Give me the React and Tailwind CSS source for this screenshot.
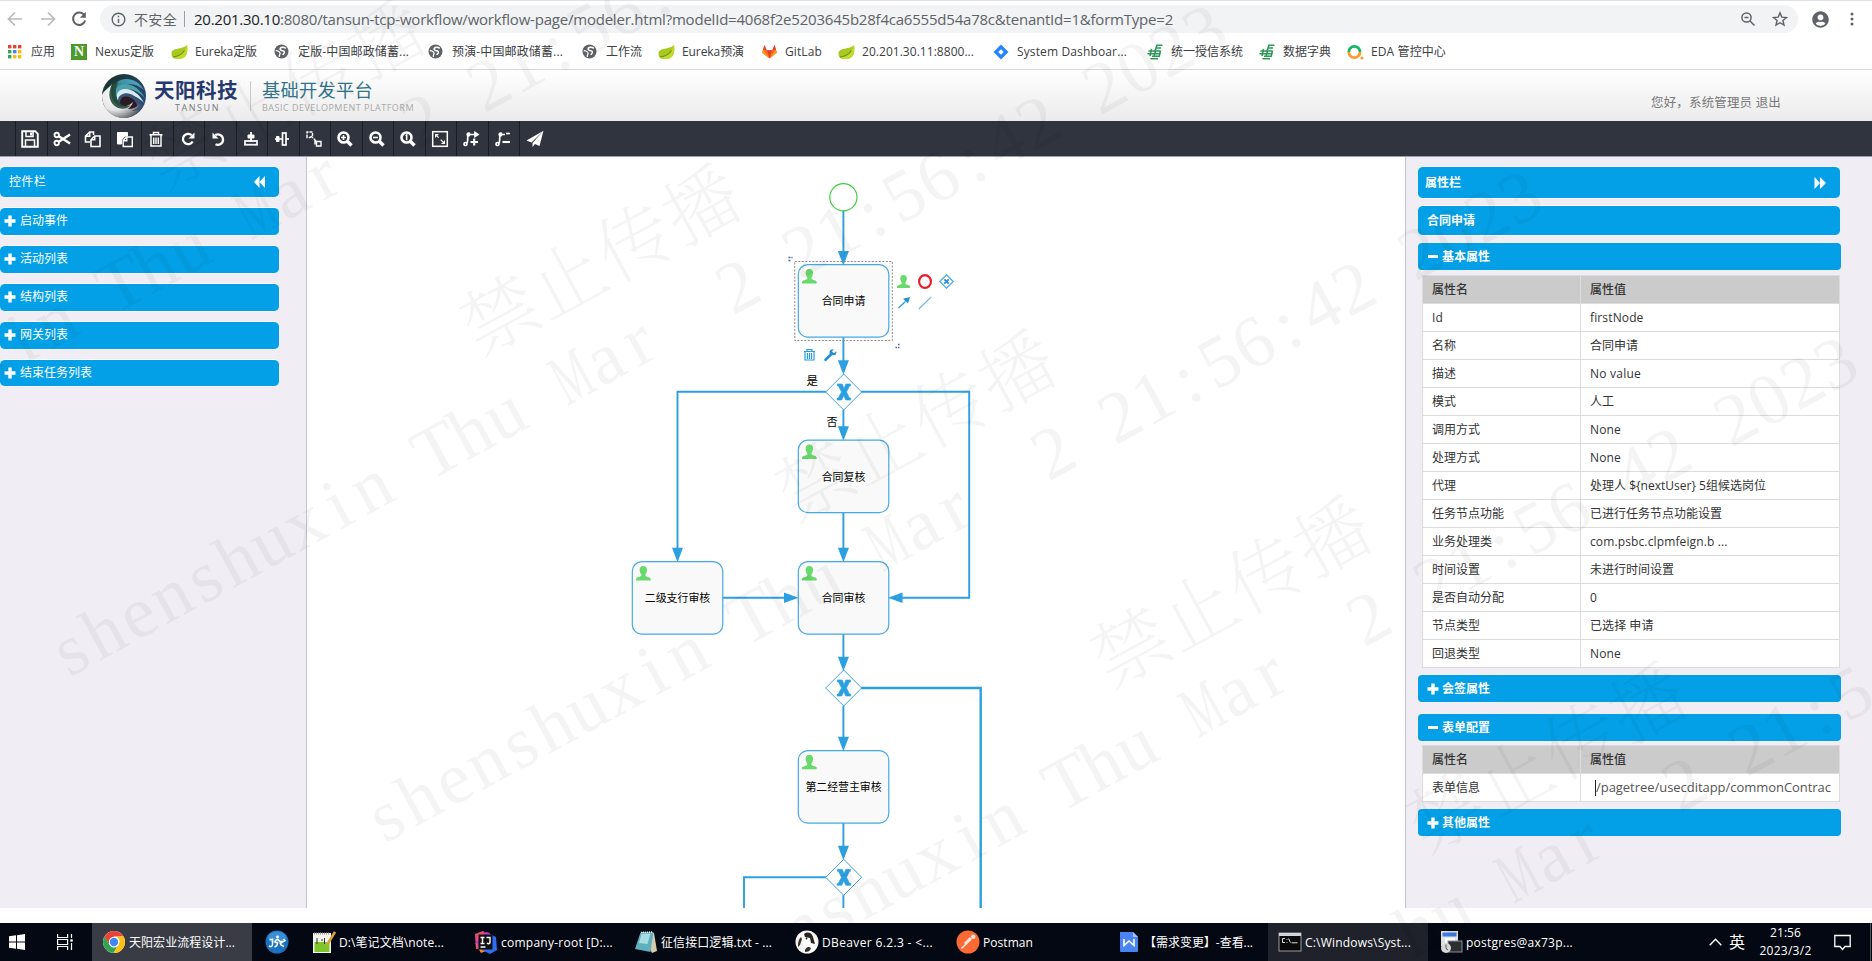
import { useLayoutEffect, useRef } from "react";
import { FaUserCircle } from "react-icons/fa";

const FONT = "font-['Open_Sans','Noto_Sans_CJK_SC',sans-serif]";

/* A single line of text tracked so that it fills exactly `w` pixels. */
function Fit({ w, className = "", children }) {
  const ref = useRef(null);
  useLayoutEffect(() => {
    const el = ref.current;
    el.style.letterSpacing = "0px";
    const natural = el.getBoundingClientRect().width;
    el.style.letterSpacing = (w - natural) / String(children).length + "px";
  }, [w, children]);
  return (
    <span ref={ref} className={"inline-block shrink-0 self-start whitespace-pre " + className}>
      {children}
    </span>
  );
}

/* ---------- Browser chrome ---------- */

function AddressBar() {
  return (
    <div className="flex h-[37px] items-center border-t border-[#dee1e6] bg-white text-[#5f6368]">
      <svg className="ml-[6px] h-[18px] w-[18px]" viewBox="0 0 18 18" fill="none" stroke="#b8babd" strokeWidth="1.7">
        <path d="M16 9H3M9 2.5 2.5 9 9 15.5" />
      </svg>
      <svg className="ml-[15px] h-[18px] w-[18px]" viewBox="0 0 18 18" fill="none" stroke="#b8babd" strokeWidth="1.7">
        <path d="M2 9h13M9 2.5 15.500 9 9 15.500" />
      </svg>
      <svg className="ml-[13px] h-[18px] w-[18px]" viewBox="0 0 18 18" fill="none" stroke="#5f6368" strokeWidth="2">
        <path d="M14.300 5.100A6.200 6.200 0 1 0 15.200 10.500" />
        <path d="M15.800 1.800v6h-6z" fill="#5f6368" stroke="none" />
      </svg>
      <div className="ml-[12px] flex h-[28px] w-[1698px] items-center rounded-full bg-[#f1f3f4] pl-[11px]">
        <svg className="h-[15px] w-[15px]" viewBox="0 0 15 15" fill="none" stroke="#5f6368" strokeWidth="1.4">
          <circle cx="7.500" cy="7.500" r="6.300" />
          <path d="M7.500 6.700V11M7.500 3.800v1.500" />
        </svg>
        <div className="ml-[8px] w-[50px] text-[14px]"><Fit w={43}>不安全</Fit></div>
        <div className="h-[16px] w-px bg-[#9aa0a6]" />
        <div className="ml-[9px] flex text-[15px]">
          <Fit w={86} className="text-[#202124]">20.201.30.10</Fit>
          <Fit w={893}>:8080/tansun-tcp-workflow/workflow-page/modeler.html?modelId=4068f2e5203645b28f4ca6555d54a78c&tenantId=1&formType=2</Fit>
        </div>
        <svg className="ml-auto h-[16px] w-[16px]" viewBox="0 0 16 16" fill="none" stroke="#5f6368" strokeWidth="1.5">
          <circle cx="6.500" cy="6.500" r="4.600" />
          <path d="m10 10 4.500 4.500M4.500 6.500h4" />
        </svg>
        <svg className="ml-[16px] mr-[10px] h-[16px] w-[16px]" viewBox="0 0 16 16" fill="none" stroke="#5f6368" strokeWidth="1.4">
          <path d="m8 1.800 1.800 4.300 4.700.4-3.600 3 1.100 4.600L8 11.700l-4 2.400 1.100-4.600-3.600-3 4.700-.4z" />
        </svg>
      </div>
      <FaUserCircle className="ml-[14px] h-[17px] w-[17px]" />
      <svg className="ml-[20px] h-[16px] w-[6px]" viewBox="0 0 6 16" fill="#5f6368">
        <circle cx="3" cy="3" r="1.500" /><circle cx="3" cy="8" r="1.500" /><circle cx="3" cy="13" r="1.500" />
      </svg>
    </div>
  );
}

function FavIcon({ kind }) {
  switch (kind) {
    case "apps":
      return (
        <svg className="h-[15px] w-[15px]" viewBox="0 0 15 15">
          {["#ea4335", "#ea4335", "#ea4335", "#34a853", "#4285f4", "#fbbc05", "#34a853", "#fbbc05", "#fbbc05"].map((c, i) => (
            <rect key={i} x={1 + (i % 3) * 5} y={1 + Math.floor(i / 3) * 5} width="3.400" height="3.400" fill={c} />
          ))}
        </svg>
      );
    case "nexus":
      return (
        <div className="flex h-[16px] w-[16px] items-center justify-center bg-[#4c9a2a] font-['Liberation_Serif',serif] text-[14px] leading-none font-bold text-white">N</div>
      );
    case "leaf":
      return (
        <svg className="h-[16px] w-[17px]" viewBox="0 0 17 16">
          <path d="M16 1c1 6 .5 14-8.500 14C3 15 .5 14 .5 9.500.5 3.500 12 5.500 16 1z" fill="#a9c820" />
          <path d="M16 1c1 6 .5 14-8.500 14C5 15 3 14.500 2 13.500 8 13 13 10 16 1z" fill="#c3d92c" />
          <path d="M2 13c5-.5 9-2.500 11.500-6.500" stroke="#5d9b13" fill="none" strokeWidth="1.200" />
        </svg>
      );
    case "globe":
      return (
        <svg className="h-[15px] w-[15px]" viewBox="0 0 15 15">
          <circle cx="7.500" cy="7.500" r="7" fill="#5f6368" />
          <path d="M11.800 4.300c-1-.8-2.300-1.200-3.500-1.100-1.500.2-2.300 1-2.200 2 .2 1.300 1.500 1.300 2.700 1.600 1.300.3 1.800 1 1.500 2-.3.900-1.200 1-1.300 2.200" fill="none" stroke="#fff" strokeWidth="1.500" />
          <path d="M1.800 6.500c1.500.4 2.800.6 3.800 1.600.9 1 .6 1.900 0 2.700-.4.600-.3 1.300-.2 2" fill="none" stroke="#fff" strokeWidth="1.300" />
        </svg>
      );
    case "gitlab":
      return (
        <svg className="h-[15px] w-[17px]" viewBox="0 0 17 15">
          <path d="M8.500 14.500 1 8.800 3.500 1l2.200 5.200h5.600L13.500 1 16 8.800z" fill="#fc6d26" />
          <path d="M8.500 14.500 5.700 6.200h5.600z" fill="#e24329" />
          <path d="M8.500 14.500 1 8.800l1-3z" fill="#fca326" /><path d="m8.500 14.500 7.500-5.700-1-3z" fill="#fca326" />
          <path d="M3.500 1 2 5.800l3.700.4zM13.500 1 15 5.800l-3.700.4z" fill="#e24329" />
        </svg>
      );
    case "jira":
      return (
        <svg className="h-[16px] w-[16px]" viewBox="0 0 16 16">
          <path d="M8 .5 15.500 8 8 15.500.5 8z" fill="#2684ff" /><path d="M8 5.300 10.700 8 8 10.700 5.300 8z" fill="#fff" />
        </svg>
      );
    case "post":
      return (
        <svg className="h-[16px] w-[16px]" viewBox="0 0 16 16" fill="none" stroke="#2d9a57" strokeWidth="1.600">
          <path d="M15.500 1.200H10L8 7M14 4H8.500M1.500 7h12.300M.5 9.700h12.800M4.500 5 3 12M8.500 7 7 13M13.500 7l-1.300 5.200H5M3.500 14.800h7.500" />
        </svg>
      );
    default:
      return (
        <svg className="h-[16px] w-[17px]" viewBox="0 0 17 16" fill="none" strokeWidth="2.800">
          <path d="M1.800 8a5.600 5.600 0 0 1 11.200 0" stroke="#18b566" /><path d="M1.800 8a5.600 5.600 0 0 0 11.200 0" stroke="#ff9a2e" />
          <circle cx="15" cy="14" r="1.600" fill="#ff9a2e" />
        </svg>
      );
  }
}

const bookmarks = [
  ["apps", "应用", 24, "w-[64px]"],
  ["nexus", "Nexus定版", 59, "w-[100px]"],
  ["leaf", "Eureka定版", 62, "w-[103px]"],
  ["globe", "定版-中国邮政储蓄...", 111, "w-[154px]"],
  ["globe", "预演-中国邮政储蓄...", 111, "w-[154px]"],
  ["globe", "工作流", 36, "w-[76px]"],
  ["leaf", "Eureka预演", 62, "w-[103px]"],
  ["gitlab", "GitLab", 37, "w-[77px]"],
  ["leaf", "20.201.30.11:8800...", 112, "w-[155px]"],
  ["jira", "System Dashboar...", 110, "w-[154px]"],
  ["post", "统一授信系统", 72, "w-[112px]"],
  ["post", "数据字典", 48, "w-[88px]"],
  ["eda", "EDA 管控中心", 75, "w-[110px]"],
];

function Bookmarks() {
  return (
    <div className="flex h-[33px] items-center border-b border-[#d6d8da] bg-white pb-[3px] pl-[7px] text-[12px] text-[#3c4043]">
      {bookmarks.map(([icon, label, w, box], i) => (
        <div key={i} className={"flex shrink-0 items-center " + box}>
          <div className="flex w-[24px] shrink-0"><FavIcon kind={icon} /></div>
          <Fit w={w}>{label}</Fit>
        </div>
      ))}
    </div>
  );
}

/* ---------- Application header and toolbar ---------- */

function Logo() {
  return (
    <svg className="h-[46px] w-[46px]" viewBox="0 0 46 46">
      <defs>
        <linearGradient id="rim" x1="0" y1="0" x2="1" y2=".9">
          <stop offset="0" stopColor="#1b2f24" /><stop offset=".45" stopColor="#1d3f4c" /><stop offset="1" stopColor="#2c4a86" />
        </linearGradient>
        <linearGradient id="band" x1="0" y1="1" x2="1" y2="0">
          <stop offset="0" stopColor="#1f5a50" /><stop offset=".6" stopColor="#3e97a8" /><stop offset="1" stopColor="#6aa9cf" />
        </linearGradient>
        <radialGradient id="pearl" cx=".35" cy=".35" r=".75">
          <stop offset="0" stopColor="#ffffff" /><stop offset=".55" stopColor="#e6e6e8" /><stop offset="1" stopColor="#5b5c60" />
        </radialGradient>
      </defs>
      <circle cx="23" cy="23" r="22" fill="url(#rim)" />
      <path d="M16 9c8-6 21-3 27 8-7-6-16-8-24-4-4 2-6 6-6 10-1-6 0-11 3-14z" fill="url(#band)" />
      <path d="M17 13c8-5 20-1 27 12-8-8-17-11-24-7-3 2-5 5-5 9-2-6-1-11 2-14z" fill="#4ca0ae" />
      <path d="M18 18c8-5 19 0 25 12-7-7-15-10-21-7-3 1-4 4-4 7-3-5-3-9 0-12z" fill="#d7ebf2" />
      <path d="M20 22c6-4 14-1 22 10-2 5-6 9-11 10-8 0-15-7-14-14 0-3 1-5 3-6z" fill="#3a5276" />
      <path d="M22 24c6-2 13 3 14 9 0 3-3 5-6 6-6 0-11-4-11-9 0-3 1-5 3-6z" fill="#2b1a24" />
      <path d="M1 22c2-5 7-7 10-11-2 8-1 17 6 21 6 3 11 1 15-3-1 4-3 5-5 7 5 0 9-2 12-5-2 4-5 6-8 7 3 0 6-1 8-2-4 6-10 9-16 9C10 45 1 35 1 22z" fill="url(#pearl)" />
      <path d="M11 11c-5 10-3 20 6 24 6 2 10 0 13-3-5 2-9 1-12-3-4-5-4-12-1-20z" fill="#244c3c" opacity=".9" />
    </svg>
  );
}

function Header() {
  return (
    <div className="flex h-[51px] items-start bg-gradient-to-b from-white to-[#ebebeb]">
      <div className="ml-[101px] mt-[3px]"><Logo /></div>
      <div className="ml-[7px] mt-[9px] flex w-[96px] flex-col">
        <Fit w={84} className="text-[20.500px] leading-[22px] font-bold text-[#25396f]">天阳科技</Fit>
        <Fit w={45} className="ml-[21px] mt-[1px] text-[9px] leading-[12px] text-[#777]">TANSUN</Fit>
      </div>
      <div className="mt-[11px] h-[30px] w-px bg-[#c8c8c8]" />
      <div className="ml-[11px] mt-[9px] flex flex-col">
        <Fit w={111} className="text-[18.300px] leading-[22px] text-[#31748a]">基础开发平台</Fit>
        <Fit w={152} className="mt-[1px] text-[9px] leading-[12px] text-[#a9a9a9]">BASIC DEVELOPMENT PLATFORM</Fit>
      </div>
      <div className="mt-[24px] mr-[91px] ml-auto text-[12.500px] leading-[18px] text-[#777]">
        <Fit w={130}>您好，系统管理员 退出</Fit>
      </div>
    </div>
  );
}

const magnifier = (inner) => (
  <g>
    <circle cx="7.500" cy="7.500" r="5" strokeWidth="2.600" /><path d="m11.500 11.500 4 4" strokeWidth="3.400" />
    {inner}
  </g>
);

const toolIcons = [
  <g><path d="M1.200 1.200h13l2.600 2.600v13H1.200z" strokeWidth="1.900" /><path d="M5 2v4.500h7V2M4.500 16v-6h9v6" strokeWidth="1.500" /><path d="M9 2.500h2v3H9z" fill="#fff" stroke="none" /></g>,
  <g><circle cx="3.700" cy="5" r="2.200" strokeWidth="1.900" /><circle cx="3.700" cy="13" r="2.200" strokeWidth="1.900" /><path d="M5.800 6.300 17 13.500M5.800 11.700 17 4.500" strokeWidth="2.500" /></g>,
  <g strokeWidth="1.600"><path d="M6 12H1.500V6.200L5.700 2H9.500v3M5.700 2v4.200H1.500M7 9.700 10.700 6H16v10.500H7zM10.700 6v3.700H7" /></g>,
  <g><path d="M1.500 2.500h10V6H9l-3.500 4v4h-4z" fill="#fff" strokeWidth="1" /><path d="M7.200 10.500 10.500 7h5.800v9.500H7.200zM10.800 7v3.800H7.200" strokeWidth="1.400" /></g>,
  <g strokeWidth="1.500"><path d="M2.500 4.700h13M6.500 4.500V2.500h5v2M4 5v11h10V5M6.700 7.500v6.500M9 7.500v6.500M11.300 7.500v6.500" /></g>,
  <g><path d="M13.700 11.500A5.200 5.200 0 1 1 12.700 5.200" strokeWidth="2.300" /><path d="M15.500 2.500v6h-6z" fill="#fff" stroke="none" /></g>,
  <g><path d="M5.500 14.200A5.200 5.200 0 1 0 5.300 5" strokeWidth="2.300" /><path d="M2.500 2.500v6h6z" fill="#fff" stroke="none" /></g>,
  <g><path d="M9 2v10" strokeWidth="1.800" /><path d="M6 5h6v3H6z" fill="#fff" strokeWidth="1" /><rect x="3" y="11" width="12" height="3.700" strokeWidth="1.800" /></g>,
  <g><path d="M2 9h14" strokeWidth="1.600" /><path d="M3.500 6.500h2.500v5H3.500z" fill="#fff" strokeWidth="1" /><rect x="9.500" y="3" width="3.500" height="12" fill="#30343f" strokeWidth="1.700" /></g>,
  <g strokeWidth="1.400"><path d="M2 7.500V2h5.500v3.500L5 7.500zM6 6l5 5" strokeDasharray="3 1" /><path d="M11.500 11.500H16V16h-4.500zM10 14.500V10" /></g>,
  magnifier(<path d="M5 7.500h5M7.500 5v5" strokeWidth="1.500" />),
  magnifier(<path d="M5 7.500h5" strokeWidth="1.600" />),
  magnifier(<path d="M6.500 5.800 7.700 5v5.200" strokeWidth="1.500" />),
  <g><rect x="1.700" y="1.700" width="14.600" height="14.600" strokeWidth="1.500" /><path d="m5.500 5.500 7 7" strokeWidth="1.200" strokeDasharray="3 3" /><path d="M4 4h4L4 8zM14 14h-4l4-4z" fill="#fff" stroke="none" /></g>,
  <g strokeWidth="1.700"><path d="M4 13.500C7.500 13 4 5 7 4.500h6" /><circle cx="3.500" cy="14" r="1.500" /><circle cx="6.500" cy="4.500" r="1.300" /><path d="M13 2.500 16 4.500l-3 2z" fill="#fff" /><path d="M8.500 12h7.500M12.200 8.500v7" strokeWidth="2.100" /></g>,
  <g strokeWidth="1.700"><path d="M4 13.500C7.500 13 4 5 7 4.500h4" /><circle cx="3.500" cy="14" r="1.500" /><circle cx="6.500" cy="4.500" r="1.300" /><path d="M12 3.500h4" /><path d="M8.500 12h7.500" strokeWidth="2.100" /></g>,
  <g fill="#fff" stroke="none"><path d="M17.500.8.500 10.500l5 2zM17.500.8 6.500 13v4l2.500-3 4.500 2z" /></g>,
];

function Toolbar() {
  return (
    <div className="flex h-[36px] items-stretch border-b border-[#9a9eb4] bg-[#30343f] pl-[15px]">
      {toolIcons.map((icon, i) => (
        <div key={i} className="flex w-[31.530px] shrink-0 items-center justify-center border-l border-[#1b1d24] pr-[2px]">
          <svg className="h-[18px] w-[18px]" viewBox="0 0 18 18" fill="none" stroke="#fff">{icon}</svg>
        </div>
      ))}
    </div>
  );
}

/* ---------- Left palette ---------- */

function PlusMark({ className = "" }) {
  return (
    <svg className={"h-[12px] w-[12px] shrink-0 " + className} viewBox="0 0 12 12" fill="#fff">
      <path d="M4.300.5h3.400v3.800h3.800v3.400H7.700v3.800H4.300V7.700H.5V4.300h3.800z" />
    </svg>
  );
}

function MinusMark() {
  return <div className="mx-[1px] h-[3px] w-[10px] shrink-0 bg-white" />;
}

function LeftPanel() {
  return (
    <div className="flex w-[307px] shrink-0 flex-col border-r border-[#c5c3cc] bg-[#f0edf5] pt-[9px] text-[12px] text-white">
      <div className="mb-[9px] flex h-[32px] w-[279px] items-center rounded-[5px] border-y border-white bg-[#03a0e7] pr-[14px] pl-[9px]">
        <div className="flex"><Fit w={37}>控件栏</Fit></div>
        <svg className="ml-auto h-[12px] w-[11px]" viewBox="0 0 11 12" fill="#fff"><path d="M5.500 0v12L0 6zM11 0v12L5.500 6z" /></svg>
      </div>
      {[["启动事件", 48], ["活动列表", 48], ["结构列表", 48], ["网关列表", 48], ["结束任务列表", 72]].map(([t, w]) => (
        <div key={t} className="mb-[9px] flex h-[28.900px] w-[279px] items-center rounded-[5px] border-y border-white bg-[#03a0e7] pl-[4px]">
          <PlusMark className="mr-[4px]" />
          <div className="flex leading-[18px]"><Fit w={w}>{t}</Fit></div>
        </div>
      ))}
    </div>
  );
}

/* ---------- Process diagram ---------- */

function Arrow({ x, y, dir = "down" }) {
  if (dir === "right") return <path d={`M${x} ${y}l-14.500-5.200v10.400z`} fill="#2ba0e0" />;
  if (dir === "left") return <path d={`M${x} ${y}l14.500-5.200v10.400z`} fill="#2ba0e0" />;
  return <path d={`M${x} ${y}l-5.500-14.500h11z`} fill="#2ba0e0" />;
}

function UserMark({ x, y, s = 1 }) {
  return (
    <path
      transform={`translate(${x} ${y}) scale(${s})`}
      d="M7.300 0c2.600 0 4 1.800 3.700 4.600-.2 2-.8 3-1.600 4v1.500c1.800 1 4.800 1.200 5.300 2.700v1.700H0v-1.700c.5-1.500 3.500-1.700 5.300-2.700V8.600c-.8-1-1.400-2-1.600-4C3.400 1.800 4.700 0 7.300 0z"
      fill="#68d96b"
    />
  );
}

function Task({ x, y, label }) {
  return (
    <g>
      <rect x={x} y={y} width="90.500" height="72.500" rx="9.500" fill="#f9f9f9" stroke="#45a9e2" strokeWidth="1.200" />
      <UserMark x={x + 3.700} y={y + 4.200} />
      <text x={x + 45.200} y={y + 40.400} textAnchor="middle" fontSize="10.900" fill="#000">{label}</text>
    </g>
  );
}

function Gateway({ y }) {
  return (
    <g>
      <path d={`M843.700 ${y - 18}l18 18-18 18-18-18z`} fill="#fff" stroke="#3ba5e0" strokeWidth="1" />
      <path d={`M837.300 ${y - 8}h5l1.700 4.500 1.800-4.500h4.700v2h-1l-3 6 3 6h1.200v2h-5l-1.900-4.500-2 4.500h-4.700v-2h1.200l3.200-6-3-6h-1.200z`} fill="#2ba0e0" stroke="#2ba0e0" strokeWidth=".6" />
    </g>
  );
}

function Diagram() {
  return (
    <svg className="h-[751px] w-[1098px] shrink-0 bg-white" viewBox="307 157 1098 751">
      <g fill="none" stroke="#2ba0e0" strokeWidth="1.900">
        <path d="M843.400 211v45M843.400 337v30M843.400 410v20M843.400 512v40M843.400 634v26M843.400 706v35M843.400 823v27M843.400 895v14" />
        <path d="M826 391.700H677.500V552M861 391.700h108.200v206H900M722.500 597.700H788M826 877.200h-82V909" />
        <path d="M861 688h119.700V909" strokeWidth="2.400" />
      </g>
      <circle cx="843.400" cy="197.300" r="13.600" fill="#fff" stroke="#3fce43" strokeWidth="1.200" />
      <Task x={798.300} y={264.700} label="合同申请" />
      <Task x={798.300} y={440.200} label="合同复核" />
      <Task x={632.300} y={561.700} label="二级支行审核" />
      <Task x={798.300} y={561.700} label="合同审核" />
      <Task x={798.300} y={750.600} label="第二经营主审核" />
      <Gateway y={392} /><Gateway y={688} /><Gateway y={877.300} />
      <Arrow x={843.400} y={265.500} /><Arrow x={843.400} y={374.800} /><Arrow x={843.400} y={440.800} />
      <Arrow x={843.400} y={562.300} /><Arrow x={677.500} y={562.300} /><Arrow x={843.400} y={671.300} />
      <Arrow x={843.400} y={751.300} /><Arrow x={843.400} y={860.300} />
      <Arrow x={798.500} y={597.700} dir="right" /><Arrow x={888} y={597.700} dir="left" />

      <rect x="794.800" y="261.500" width="97.500" height="79" fill="none" stroke="#8b8b8b" strokeWidth="1" strokeDasharray="2 1.500" />
      <path d="M788.500 257.500h2M791.500 257.500h1M788.500 260.500h2M895.500 347.500h1.500M898 347.500h1.500M898 344.500h1.500" stroke="#46609a" strokeWidth="1.500" />

      <UserMark x={897} y={275} s={0.89} />
      <ellipse cx="925" cy="281.500" rx="5.900" ry="6.400" fill="#fff" stroke="#ee1c25" strokeWidth="2.200" />
      <path d="m946.500 274.800 6.800 6.700-6.800 6.700-6.800-6.700z" fill="#fff" stroke="#45a9e2" strokeWidth="1.200" />
      <path d="m944.300 279.300 4.400 4.400m0-4.400-4.400 4.400" stroke="#2b8fd0" strokeWidth="1.900" />
      <path d="m898.500 308 7-6.500" stroke="#2b9bd9" strokeWidth="1.300" /><path d="m910 297-2 6.500-5-4.800z" fill="#1f8fd6" />
      <path d="m918.800 309 12.500-12.200" stroke="#6bb6e4" strokeWidth="1.100" />
      <g fill="none" stroke="#2b9bd9" strokeWidth="1.200">
        <path d="M804 351.500h11M807 351v-1.500h5v1.500M805 352v8h9v-8M807.500 353v6M809.500 353v6M811.500 353v6" />
      </g>
      <path d="m825.500 359.800 5.500-5.300" stroke="#1f8fd6" strokeWidth="2.600" strokeLinecap="round" />
      <path d="M829.500 352.500c0-2.500 2-3.700 4.200-3.200l-1.700 2.200 1.200 1.300h1.600l1.600-1.600c.6 2.300-1 4.300-3.600 4.100-2.200-.2-3.300-1-3.300-2.800z" fill="#1f8fd6" />
      <text x="806.500" y="385.300" fontSize="11.500" fill="#000">是</text>
      <text x="826.500" y="426" fontSize="11" fill="#000">否</text>
    </svg>
  );
}

/* ---------- Right property panel ---------- */

const basicRows = [
  ["Id", 11, "firstNode", 53.500],
  ["名称", 24, "合同申请", 48],
  ["描述", 24, "No value", 51],
  ["模式", 24, "人工", 24],
  ["调用方式", 48, "None", 31],
  ["处理方式", 48, "None", 31],
  ["代理", 24, "处理人 ${nextUser} 5组候选岗位", 176],
  ["任务节点功能", 72, "已进行任务节点功能设置", 132],
  ["业务处理类", 60, "com.psbc.clpmfeign.b ...", 137.500],
  ["时间设置", 48, "未进行时间设置", 84],
  ["是否自动分配", 72, "0", 7],
  ["节点类型", 48, "已选择 申请", 63.500],
  ["回退类型", 48, "None", 31],
];

function PropRow({ head, children }) {
  return (
    <div className={"grid h-[28px] grid-cols-[158px_1fr] border-b border-[#dcdcdc] " + (head ? "bg-[#cbcbcb] font-medium" : "bg-white")}>
      {children}
    </div>
  );
}

function PropTable({ children }) {
  return (
    <div className="ml-[4px] w-[418px] border-x border-t border-[#dcdcdc] text-[12px] leading-[27px] text-[#333]">
      <PropRow head>
        <div className="border-r border-[#dcdcdc] pl-[9px]"><Fit w={36}>属性名</Fit></div>
        <div className="pl-[9px]"><Fit w={36}>属性值</Fit></div>
      </PropRow>
      {children}
    </div>
  );
}

function Section({ open, label, className = "" }) {
  return (
    <div className={"flex h-[27px] w-[423px] items-center rounded-[4px] bg-[#03a0e7] pl-[9px] text-[12px] font-bold text-white " + className}>
      <div className="w-[15px]">{open ? <MinusMark /> : <PlusMark />}</div>
      <div className="flex"><Fit w={48}>{label}</Fit></div>
    </div>
  );
}

function RightPanel() {
  return (
    <div className="flex flex-1 flex-col border-l border-[#c5c3cc] bg-[#f0edf5] pt-[9px] pl-[12px]">
      <div className="flex h-[33px] w-[422px] items-center rounded-[5px] border-y border-white bg-[#03a0e7] pr-[14px] pl-[7px] text-[12px] font-bold text-white">
        <div className="flex"><Fit w={36}>属性栏</Fit></div>
        <svg className="ml-auto h-[12px] w-[12px]" viewBox="0 0 12 12" fill="#fff"><path d="M.5 0 6 6 .5 12zM6 0l6 6-6 6z" /></svg>
      </div>
      <div className="mt-[6px] flex h-[31px] w-[422px] items-center rounded-[5px] border-y border-white bg-[#03a0e7] pl-[9px] text-[12px] font-bold text-white">
        <div className="flex"><Fit w={48}>合同申请</Fit></div>
      </div>
      <Section open label="基本属性" className="mt-[7px] mb-[5px]" />
      <PropTable>
        {basicRows.map(([name, nw, value, vw]) => (
          <PropRow key={name}>
            <div className="border-r border-[#dcdcdc] pl-[9px]"><Fit w={nw}>{name}</Fit></div>
            <div className="pl-[9px]"><Fit w={vw}>{value}</Fit></div>
          </PropRow>
        ))}
      </PropTable>
      <Section label="会签属性" className="mt-[7px] mb-[12px]" />
      <Section open label="表单配置" className="mb-[4px]" />
      <PropTable>
        <PropRow>
          <div className="border-r border-[#dcdcdc] pl-[9px]"><Fit w={48}>表单信息</Fit></div>
          <div className="flex items-center pl-[14px]">
            <div className="h-[16px] w-px bg-[#222]" />
            <div className="flex text-[13px] text-[#555]"><Fit w={235}>/pagetree/usecditapp/commonContrac</Fit></div>
          </div>
        </PropRow>
      </PropTable>
      <Section label="其他属性" className="mt-[7px]" />
    </div>
  );
}

/* ---------- Taskbar ---------- */

const taskIcons = {
  chrome: (
    <g>
      <circle cx="12" cy="12" r="11" fill="#fff" />
      <path d="M2.500 6.500A11 11 0 0 1 21.500 6.500H12L7.200 14.800z" fill="#e94335" />
      <path d="M2.500 6.500A11 11 0 0 0 11.500 23l4.800-8.300A5 5 0 0 1 7.300 14.600z" fill="#34a353" />
      <path d="M21.500 6.500A11 11 0 0 1 11.500 23l4.800-8.300A5 5 0 0 0 12 6.500z" fill="#fbc116" />
      <circle cx="12" cy="12" r="5.200" fill="#fff" /><circle cx="12" cy="12" r="4.200" fill="#4285f4" />
    </g>
  ),
  blue: (
    <g>
      <circle cx="12" cy="12" r="11.500" fill="#1a72c0" /><ellipse cx="12" cy="7.500" rx="9" ry="6" fill="#4ea3e4" opacity=".6" />
      <path d="M7.500 8.500v6c0 2.500-2.500 2.500-3.500 1.200M4.500 9.500H8M9.500 17c2-.5 3-2 3-4l-2.500-1c.5-2 1.500-2.500 3-2.500l2 2h3M15 12.500l1 2.500 3 1.500M16 13l4-2.500-1.500-1.500" stroke="#fff" strokeWidth="1.500" fill="none" />
      <circle cx="12.500" cy="7" r="1.400" fill="#fff" />
    </g>
  ),
  npp: (
    <g>
      <rect x="1" y="3" width="18" height="20" fill="#f4f6ec" /><rect x="2.500" y="12" width="15" height="10" fill="#7ec62c" />
      <path d="M2 3.500h16" stroke="#999" strokeWidth="2" strokeDasharray="1 1" /><path d="M5 8v6M9 10h2M12.500 8v6" stroke="#333" />
      <path d="m23 2-8 13" stroke="#d9a13a" strokeWidth="2.600" />
    </g>
  ),
  ij: (
    <g>
      <path d="M1 4 9 1l6 5-4 12-9 1z" fill="#f0487c" /><path d="m1 13 6 10 8-3z" fill="#f8862c" /><path d="m12 2 10 5 1 13-7 4-8-4z" fill="#2f6df2" />
      <path d="m12 2 4 1-2 8-9 9-3-8z" fill="#b43ad0" /><rect x="4.500" y="4.500" width="14" height="15" fill="#111" />
      <path d="M6.500 7.500h4M8.500 7.500v6M6.500 13.500h4M12.500 7.500h3.500v5c0 1.500-2 1.500-3 .5M6.500 17h5" stroke="#fff" strokeWidth="1.400" fill="none" />
    </g>
  ),
  notepad: (
    <g>
      <path d="m7 2 13 1 3 18-5 2z" fill="#d5ccb0" /><path d="m6.500 2.500 13-.5-3 20L1 19z" fill="#5fb0bf" /><path d="m7.500 4 9-.5L13.500 14 5 13z" fill="#a6dde3" />
      <path d="m7 2.500 12-.5" stroke="#efefef" strokeWidth="1.600" strokeDasharray="1 1" />
    </g>
  ),
  dbeaver: (
    <g>
      <circle cx="12" cy="12" r="11.500" fill="#fdfdfd" /><path d="M9 4c4-3 8-1 9 3l2 7-4-1-1-5-5-1z" fill="#2c2320" />
      <path d="M6 7c-3 3-3 7-3 10l2-2 2-6z" fill="#3b302b" /><circle cx="11.500" cy="8.500" r=".9" fill="#222" /><path d="M10 20c1-3 4-4 6-2-1 3-3 4-6 4z" fill="#3b302b" />
    </g>
  ),
  postman: (
    <g>
      <circle cx="12" cy="12" r="11.500" fill="#fb6a35" /><path d="m5.500 18.500 9-9" stroke="#fff" strokeWidth="1.300" />
      <circle cx="17.300" cy="6.800" r="2.200" fill="#fde3d8" /><path d="m9 14 6-6" stroke="#fde3d8" strokeWidth="3" />
    </g>
  ),
  wps: (
    <g>
      <path d="M3 2h13l5 5v14a1 1 0 0 1-1 1H4a1 1 0 0 1-1-1z" fill="#4a84f2" /><path d="M16 2v5h5z" fill="#a9c6fb" />
      <path d="M7 9v6.500l5-4.500 5 4.500V9" fill="none" stroke="#fff" strokeWidth="1.600" />
    </g>
  ),
  cmd: (
    <g>
      <rect x="1" y="3" width="22" height="18" fill="#0a0a0a" stroke="#9a9a9a" strokeWidth="1" /><rect x="1" y="3" width="22" height="3" fill="#cfd6dc" />
      <path d="M7 8.500H4.500v4H7M9 9v.8M9 12v.8M10.500 8.500l2 4M13.500 12.800h6" stroke="#ddd" fill="none" />
    </g>
  ),
  putty: (
    <g>
      <rect x="2" y="1" width="17" height="15" fill="#e3e3e3" /><rect x="3.500" y="2.500" width="14" height="4" fill="#3f7be0" /><rect x="6" y="8" width="10" height="6" fill="#fff" />
      <rect x="9" y="11" width="14" height="11" fill="#2b2f33" stroke="#8c8c8c" /><circle cx="7" cy="18" r="5" fill="#d8d8d8" /><path d="M7 14.500v4l2 1.500" stroke="#555" fill="none" />
    </g>
  ),
};

function TaskButton({ icon, label, w, box }) {
  return (
    <div className={"flex h-full shrink-0 items-center " + box}>
      <svg className="mr-[3px] h-[24px] w-[24px] shrink-0" viewBox="0 0 24 24">{taskIcons[icon]}</svg>
      {label ? <div className="flex pt-[1px]"><Fit w={w}>{label}</Fit></div> : null}
    </div>
  );
}

function Taskbar() {
  return (
    <div className="flex h-[38px] shrink-0 items-center bg-[#040812] text-[12px] text-white">
      <svg className="ml-[9px] h-[16px] w-[16px]" viewBox="0 0 16 16" fill="#fff">
        <path d="M0 2.300 7 1.300v6.200H0zM8 1.200 16 0v7.500H8zM0 8.500h7v6.200l-7-1zM8 8.500h8V16l-8-1.200z" />
      </svg>
      <svg className="ml-[32px] h-[16px] w-[16px]" viewBox="0 0 16 16" fill="none" stroke="#fff" strokeWidth="1.200">
        <path d="M.6 0v3.500h10V0M.6 16v-3.500h10V16M.6 5.500h10v5H.6zM14.500 0v4M14.500 9v7" /><path d="M13.300 5.300h2.400v2.400h-2.400z" fill="#fff" stroke="none" />
      </svg>
      <div className="ml-[19px] flex h-full">
        <TaskButton icon="chrome" label="天阳宏业流程设计..." w={106} box="w-[160px] bg-[#393c45] pl-[10px]" />
        <TaskButton icon="blue" box="w-[60px] pl-[13px]" />
        <TaskButton icon="npp" label="D:\笔记文档\note..." w={105} box="w-[162px]" />
        <TaskButton icon="ij" label="company-root [D:..." w={112} box="w-[160px]" />
        <TaskButton icon="notepad" label="征信接口逻辑.txt - ..." w={111} box="w-[161px]" />
        <TaskButton icon="dbeaver" label="DBeaver 6.2.3 - <..." w={111} box="w-[161px]" />
        <TaskButton icon="postman" label="Postman" w={50} box="w-[161px]" />
        <TaskButton icon="wps" label="【需求变更】-查看..." w={109} box="w-[151px]" />
        <TaskButton icon="cmd" label="C:\Windows\Syst..." w={106} box="w-[160px] bg-[#20222b] pl-[10px]" />
        <TaskButton icon="putty" label="postgres@ax73p..." w={107} box="pl-[11px]" />
      </div>
      <div className="ml-auto flex items-center">
        <svg className="h-[8px] w-[13px]" viewBox="0 0 13 8" fill="none" stroke="#fff" strokeWidth="1.400"><path d="m.7 7.200 5.800-6 5.800 6" /></svg>
        <div className="ml-[7px] w-[30px] text-[16px] leading-none">英</div>
        <div className="flex w-[53px] flex-col items-center leading-[18.500px]">
          <div className="flex"><Fit w={31}>21:56</Fit></div>
          <div className="flex"><Fit w={52}>2023/3/2</Fit></div>
        </div>
        <svg className="ml-[22px] h-[17px] w-[17px]" viewBox="0 0 17 17" fill="none" stroke="#fff" strokeWidth="1.300">
          <path d="M.8 1.500h15.400v11H11l-2.500 3-2.500-3H.8z" />
        </svg>
        <div className="ml-[19px] h-[38px] w-[2px] border-l border-[#555]" />
      </div>
    </div>
  );
}

/* ---------- Tiled watermark ---------- */

const STAMP = "shenshuxin Thu Mar  2 21:56:42 2023";
const ADVANCE = 38;
const ANGLE = (-28.6 * Math.PI) / 180;

/* Glyphs of one tile, dropping those that fall outside the screen. */
function stampGlyphs(ox, oy) {
  return STAMP.split("")
    .map((c, i) => {
      const d = (i + 0.5) * ADVANCE;
      return { c, i, x: d, px: ox + d * Math.cos(ANGLE), py: oy + d * Math.sin(ANGLE) };
    })
    .filter((g) => g.c !== " " && g.px > -10 && g.px < 1890 && g.py > 5 && g.py < 965);
}

function Watermark() {
  return (
    <svg className="pointer-events-none absolute inset-0 h-[961px] w-[1872px]" viewBox="0 0 1872 961" fill="#000" opacity="0.038">
      {[-1, 0, 1, 2, 3, 4].map((k) => {
        const dx = k * 315.5;
        const dy = k * 166;
        return (
          <g key={k}>
            <g transform={`translate(${65 + dx} ${680 + dy}) rotate(-28.6)`} fontSize="73" fontFamily="'Liberation Serif', serif">
              {stampGlyphs(65 + dx, 680 + dy).map(({ c, i, x }) =>
                c === "M" ? (
                  <text key={i} x={x - 17} y="0" textLength="36" lengthAdjust="spacingAndGlyphs">{c}</text>
                ) : (
                  <text key={i} x={x} y="0" textAnchor="middle">{c}</text>
                )
              )}
            </g>
            {k < 4 ? (
              <text
                transform={`translate(${480 + dx} ${357 + dy}) rotate(-28.6)`}
                fontSize="75"
                letterSpacing="1.500"
                fontWeight="100"
                fontFamily="'Noto Serif CJK SC','Noto Sans CJK SC',sans-serif"
              >
                禁止传播
              </text>
            ) : null}
          </g>
        );
      })}
    </svg>
  );
}

export default function App() {
  return (
    <div className={"relative flex h-[961px] w-[1872px] flex-col overflow-hidden bg-white " + FONT}>
      <AddressBar />
      <Bookmarks />
      <Header />
      <Toolbar />
      <div className="flex h-[751px] shrink-0">
        <LeftPanel />
        <Diagram />
        <RightPanel />
      </div>
      <div className="h-[15px] shrink-0" />
      <Taskbar />
      <Watermark />
    </div>
  );
}
